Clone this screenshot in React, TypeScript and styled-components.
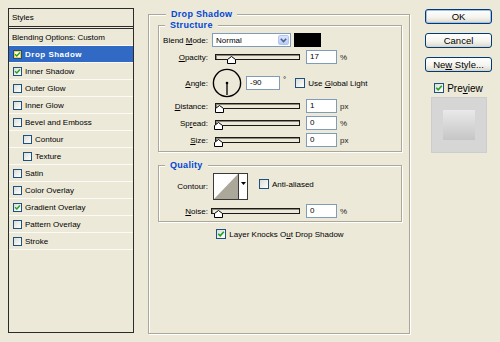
import React from "react";
import styled, { createGlobalStyle } from "styled-components";

const GlobalStyle = createGlobalStyle`
  html, body { margin: 0; padding: 0; background: #ece9d8; }
  body { font-family: "Liberation Sans", Arial, sans-serif; font-size: 8px; color: #000; }
  * { box-sizing: border-box; }
  u { text-underline-offset: 1px; }
`;

const Window = styled.div`
  display: flex;
  align-items: flex-start;
  width: 500px;
  height: 342px;
  padding: 8px 0 0 8px;
`;

/* ---------- left styles list ---------- */

const StylesPanel = styled.div`
  width: 126px;
  height: 325px;
  border: 1px solid #2b2b2b;
  display: flex;
  flex-direction: column;
  flex: none;
`;

const PanelHeader = styled.div`
  height: 20px;
  line-height: 17px;
  padding-left: 3px;
  border-bottom: 3px double #2b2b2b;
`;

const ListRow = styled.div<{ $selected?: boolean; $indent?: boolean }>`
  display: flex;
  align-items: center;
  gap: 3px;
  height: 17px;
  padding-left: ${(p) => (p.$indent ? 14 : 4)}px;
  border-bottom: 1px solid #fbfaf4;
  background: ${(p) => (p.$selected ? "#316ac5" : "transparent")};
  color: ${(p) => (p.$selected ? "#fff" : "#000")};
  font-weight: ${(p) => (p.$selected ? "bold" : "normal")};
  letter-spacing: ${(p) => (p.$selected ? "0.5px" : "0")};
  white-space: nowrap;
`;

const PlainRow = styled(ListRow)`
  padding-left: 3px;
`;

/* ---------- checkbox ---------- */

const Box = styled.span<{ $size: number; $hot?: boolean }>`
  width: ${(p) => p.$size}px;
  height: ${(p) => p.$size}px;
  flex: none;
  display: inline-flex;
  align-items: center;
  justify-content: center;
  border: 1px solid #1c5180;
  background: ${(p) => (p.$hot ? "#fffbe6" : "linear-gradient(135deg, #dcdcd7, #fff)")};
  box-shadow: ${(p) => (p.$hot ? "inset 0 0 0 1px #f8c948" : "none")};
`;

const Check = ({ checked, size = 10, hot }: { checked?: boolean; size?: number; hot?: boolean }) => (
  <Box $size={size} $hot={hot}>
    {checked && (
      <svg width={size - 2} height={size - 2} viewBox="0 0 8 8">
        <path d="M1.2 3.8 L3.2 5.8 L6.8 1.8" fill="none" stroke="#21a121" strokeWidth="1.6" />
      </svg>
    )}
  </Box>
);

/* ---------- group boxes ---------- */

const Group = styled.div<{ $w: number; $h?: number; $mt: number; $pl?: number; $pr?: number }>`
  width: ${(p) => p.$w}px;
  ${(p) => (p.$h ? `height: ${p.$h}px;` : "")}
  margin-top: ${(p) => p.$mt}px;
  padding: 0 ${(p) => p.$pr ?? 0}px 0 ${(p) => p.$pl ?? 0}px;
  border: 1px solid #aca899;
  box-shadow: inset 1px 1px 0 #fff, 1px 1px 0 #fff;
  display: flex;
  flex-direction: column;
  flex: none;
`;

const GroupTitle = styled.div<{ $indent: number }>`
  align-self: flex-start;
  height: 11px;
  margin: -6px 0 0 ${(p) => p.$indent}px;
  padding: 0 5px;
  background: #ece9d8;
  color: #0046d5;
  font-weight: bold;
  font-size: 9px;
  line-height: 11px;
  letter-spacing: 0.3px;
`;

const MainGroup = styled(Group)`
  margin-left: 14px;
`;

/* ---------- control rows ---------- */

const Row = styled.div<{ $mt: number; $h?: number }>`
  display: flex;
  align-items: center;
  height: ${(p) => p.$h ?? 14}px;
  margin-top: ${(p) => p.$mt}px;
  white-space: nowrap;
`;

const Label = styled.span`
  width: 53px;
  padding-right: 4px;
  text-align: right;
  flex: none;
`;

const TextBox = styled.div<{ $w: number; $ml: number }>`
  width: ${(p) => p.$w}px;
  height: 14px;
  margin-left: ${(p) => p.$ml}px;
  border: 1px solid #7f9db9;
  background: #fff;
  padding-left: 3px;
  line-height: 12px;
  flex: none;
`;

const Unit = styled.span`
  margin-left: 3px;
  color: #222;
`;

const SelectBox = styled.div`
  width: 79px;
  height: 14px;
  border: 1px solid #7f9db9;
  background: #fff;
  display: flex;
  align-items: center;
  justify-content: space-between;
  padding: 0 1px 0 3px;
  flex: none;
`;

const DropButton = styled.span`
  width: 11px;
  height: 10px;
  border-radius: 2px;
  background: linear-gradient(180deg, #dbe5fd, #b8cbf7);
  border: 1px solid #b3c6f2;
  display: flex;
  align-items: center;
  justify-content: center;
`;

const Swatch = styled.div`
  width: 27px;
  height: 14px;
  margin-left: 3px;
  background: #000;
  flex: none;
`;

const SliderWrap = styled.div<{ $w: number; $ml: number }>`
  position: relative;
  width: ${(p) => p.$w}px;
  height: 14px;
  margin-left: ${(p) => p.$ml}px;
  flex: none;
`;

const Track = styled.div`
  margin-top: 4px;
  height: 6px;
  border: 1px solid #1a1a1a;
  background: #ece9d8;
  box-shadow: inset 1px 1px 0 #8a8778;
`;

const Thumb = styled.svg`
  position: absolute;
  top: 6px;
`;

const Slider = ({ value, w, ml, pad = 2 }: { value: number; w: number; ml: number; pad?: number }) => (
  <SliderWrap $w={w} $ml={ml}>
    <Track />
    <Thumb width="9" height="8" viewBox="0 0 9 8" style={{ left: pad + (value / 100) * (w - 10) - 3 }}>
      <path d="M0.5 7.5 V3.5 L4.5 0.5 L8.5 3.5 V7.5 Z" fill="#fff" stroke="#000" strokeWidth="1" />
    </Thumb>
  </SliderWrap>
);

const Degree = styled.span`
  align-self: flex-start;
  margin: 7px 0 0 3px;
`;

const CheckLabel = styled.span<{ $ml: number }>`
  display: inline-flex;
  align-items: center;
  gap: 3px;
  margin-left: ${(p) => p.$ml}px;
`;

const ContourPicker = styled.div`
  width: 35px;
  height: 27px;
  margin-left: 1px;
  border: 1px solid #3a3a3a;
  display: flex;
  background: #fff;
  flex: none;
`;

const ContourArrow = styled.div`
  width: 9px;
  border-left: 1px solid #3a3a3a;
  display: flex;
  justify-content: center;
  padding-top: 8px;
`;

const KnockRow = styled.div`
  display: flex;
  justify-content: center;
  align-items: center;
  gap: 3px;
  height: 12px;
  margin-top: 6px;
  white-space: nowrap;
`;

/* ---------- right column ---------- */

const Side = styled.div`
  width: 67px;
  margin-left: 15px;
  display: flex;
  flex-direction: column;
  align-items: center;
  flex: none;
`;

const Button = styled.button<{ $primary?: boolean; $mt: number }>`
  width: 67px;
  height: 15px;
  margin-top: ${(p) => p.$mt}px;
  padding: 0;
  border: 1px solid #003c74;
  border-radius: 3px;
  background: linear-gradient(180deg, #ffffff 0%, #f5f4ef 55%, #e4e2d8 85%, #d6d0c5 100%);
  box-shadow: ${(p) => (p.$primary ? "inset 0 0 0 1px #a6c0ea" : "none")};
  font-family: "Liberation Sans", Arial, sans-serif;
  font-size: 9.5px;
  line-height: 13px;
  color: #000;
`;

const PreviewToggle = styled.div`
  display: flex;
  align-items: center;
  gap: 3px;
  margin-top: 11px;
  font-size: 10px;
  height: 10px;
`;

const PreviewBox = styled.div`
  width: 56px;
  height: 56px;
  margin-top: 4px;
  background: #d6d6d6;
  border: 1px solid #cdcdcd;
  display: flex;
  align-items: center;
  justify-content: center;
`;

const PreviewSwatch = styled.div`
  width: 32px;
  height: 30px;
  background: linear-gradient(180deg, #e9e9e9, #c6c6c6);
`;

const styleItems = [
  { name: "Drop Shadow", checked: true, selected: true },
  { name: "Inner Shadow", checked: true },
  { name: "Outer Glow" },
  { name: "Inner Glow" },
  { name: "Bevel and Emboss" },
  { name: "Contour", indent: true },
  { name: "Texture", indent: true },
  { name: "Satin" },
  { name: "Color Overlay" },
  { name: "Gradient Overlay", checked: true },
  { name: "Pattern Overlay" },
  { name: "Stroke" },
];

export default function App() {
  return (
    <>
      <GlobalStyle />
      <Window>
        <StylesPanel>
          <PanelHeader>Styles</PanelHeader>
          <PlainRow>Blending Options: Custom</PlainRow>
          {styleItems.map((it) => (
            <ListRow key={it.name} $selected={it.selected} $indent={it.indent}>
              <Check size={9} checked={it.checked} hot={it.selected} />
              {it.name}
            </ListRow>
          ))}
        </StylesPanel>

        <MainGroup $w={262} $h={320} $mt={6} $pl={9} $pr={7}>
          <GroupTitle $indent={8}>Drop Shadow</GroupTitle>

          <Group $w={244} $mt={5}>
            <GroupTitle $indent={6}>Structure</GroupTitle>
            <Row $mt={2}>
              <Label>
                Blend <u>M</u>ode:
              </Label>
              <SelectBox>
                Normal
                <DropButton>
                  <svg width="7" height="5" viewBox="0 0 7 5">
                    <path d="M0.8 0.8 L3.5 3.6 L6.2 0.8" fill="none" stroke="#4d6185" strokeWidth="1.5" />
                  </svg>
                </DropButton>
              </SelectBox>
              <Swatch />
            </Row>
            <Row $mt={3}>
              <Label>
                <u>O</u>pacity:
              </Label>
              <Slider value={17} w={85} ml={3} />
              <TextBox $w={31} $ml={6}>17</TextBox>
              <Unit>%</Unit>
            </Row>
            <Row $mt={4} $h={30}>
              <Label>
                <u>A</u>ngle:
              </Label>
              <svg width="30" height="30" viewBox="0 0 30 30">
                <circle cx="15" cy="15" r="13.6" fill="none" stroke="#000" strokeWidth="1.4" />
                <line x1="15" y1="15" x2="15" y2="27" stroke="#000" strokeWidth="1.3" />
                <circle cx="15" cy="15" r="1.3" fill="#000" />
              </svg>
              <TextBox $w={34} $ml={4}>-90</TextBox>
              <Degree>°</Degree>
              <CheckLabel $ml={9}>
                <Check />
                <span>
                  Use <u>G</u>lobal Light
                </span>
              </CheckLabel>
            </Row>
            <Row $mt={1}>
              <Label>
                <u>D</u>istance:
              </Label>
              <Slider value={1} w={85} ml={3} />
              <TextBox $w={31} $ml={6}>1</TextBox>
              <Unit>px</Unit>
            </Row>
            <Row $mt={3}>
              <Label>
                Sp<u>r</u>ead:
              </Label>
              <Slider value={0} w={85} ml={3} />
              <TextBox $w={31} $ml={6}>0</TextBox>
              <Unit>%</Unit>
            </Row>
            <Row $mt={3}>
              <Label>
                <u>S</u>ize:
              </Label>
              <Slider value={0} w={85} ml={3} />
              <TextBox $w={31} $ml={6}>0</TextBox>
              <Unit>px</Unit>
            </Row>
            <Row $mt={4} $h={0} />
          </Group>

          <Group $w={244} $mt={13}>
            <GroupTitle $indent={6}>Quality</GroupTitle>
            <Row $mt={2} $h={27}>
              <Label>Contour:</Label>
              <ContourPicker>
                <svg width="24" height="25" viewBox="0 0 24 25">
                  <rect width="24" height="25" fill="#fff" />
                  <polygon points="0,25 24,0 24,25" fill="#aca899" />
                </svg>
                <ContourArrow>
                  <svg width="5" height="3" viewBox="0 0 5 3">
                    <polygon points="0,0 5,0 2.5,3" fill="#000" />
                  </svg>
                </ContourArrow>
              </ContourPicker>
              <CheckLabel $ml={11} style={{ alignSelf: "flex-start", marginTop: 6 }}>
                <Check />
                <span>Anti-aliased</span>
              </CheckLabel>
            </Row>
            <Row $mt={4}>
              <Label>
                <u>N</u>oise:
              </Label>
              <Slider value={0} w={89} ml={-1} pad={6} />
              <TextBox $w={31} $ml={6}>0</TextBox>
              <Unit>%</Unit>
            </Row>
            <Row $mt={3} $h={0} />
          </Group>

          <KnockRow>
            <Check checked />
            <span>
              Layer Knocks O<u>u</u>t Drop Shadow
            </span>
          </KnockRow>
        </MainGroup>

        <Side>
          <Button $primary $mt={1}>OK</Button>
          <Button $mt={9}>Cancel</Button>
          <Button $mt={9}>
            Ne<u>w</u> Style...
          </Button>
          <PreviewToggle>
            <Check checked />
            <span>
              Pre<u>v</u>iew
            </span>
          </PreviewToggle>
          <PreviewBox>
            <PreviewSwatch />
          </PreviewBox>
        </Side>
      </Window>
    </>
  );
}
